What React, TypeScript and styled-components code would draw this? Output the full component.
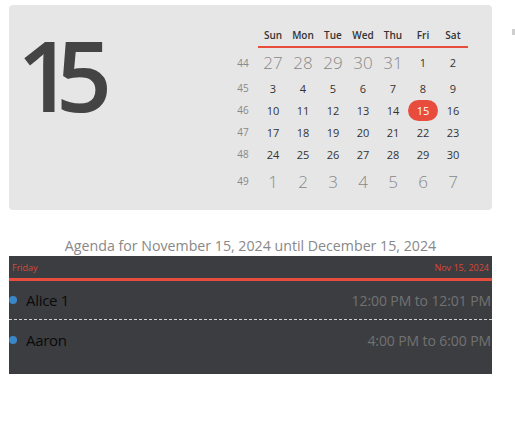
import React from "react";
import styled, { createGlobalStyle } from "styled-components";

const Global = createGlobalStyle`
  html, body { margin: 0; padding: 0; background: #ffffff; }
  body { font-family: "Open Sans", "Noto Sans", sans-serif; }
`;

const Page = styled.div`
  position: relative;
  width: 515px;
  height: 447px;
  padding: 5px 0 0 9px;
  box-sizing: border-box;
`;

const CalendarPanel = styled.div`
  width: 483px;
  height: 205px;
  background: #e6e6e6;
  border-radius: 4px;
  display: flex;
  box-sizing: border-box;
  padding: 21px 24px 0 8px;
`;

const BigDay = styled.div`
  font-size: 98px;
  font-weight: 600;
  line-height: 1;
  color: #444444;
  letter-spacing: -17px;
  margin-top: -1px;
`;

const Grid = styled.div`
  margin-left: auto;
  display: grid;
  grid-template-columns: repeat(8, 30px);
  grid-template-rows: 22px 29px 22px 22px 22px 22px 32px;
`;

const HeadCell = styled.div<{ $blank?: boolean }>`
  display: flex;
  align-items: center;
  justify-content: center;
  font-size: 10px;
  font-weight: 600;
  color: #333333;
  border-bottom: ${(p) => (p.$blank ? "none" : "2px solid #e84c3d")};
  box-sizing: border-box;
  padding-bottom: 2px;
`;

const WeekCell = styled.div`
  display: flex;
  align-items: center;
  justify-content: center;
  font-size: 10px;
  color: #888888;
`;

const DayCell = styled.div<{ $other?: boolean; $today?: boolean }>`
  display: flex;
  align-items: center;
  justify-content: center;
  font-size: ${(p) => (p.$other ? "17px" : "11px")};
  font-weight: ${(p) => (p.$other ? 300 : 400)};
  color: ${(p) => (p.$today ? "#ffffff" : p.$other ? "#888888" : "#333333")};
`;

const TodayPill = styled.span`
  display: flex;
  align-items: center;
  justify-content: center;
  width: 30px;
  height: 21px;
  border-radius: 11px;
  background: #e84c3d;
  color: #ffffff;
`;

const AgendaTitle = styled.div`
  width: 483px;
  margin-top: 25px;
  text-align: center;
  font-size: 14.2px;
  color: #888888;
  line-height: 21px;
`;

const Agenda = styled.div`
  width: 483px;
  background: #3c3d40;
  padding-bottom: 14px;
`;

const AgendaHead = styled.div`
  display: flex;
  justify-content: space-between;
  align-items: center;
  height: 22px;
  padding: 0 3px;
  font-size: 9px;
  color: #d9473a;
  border-bottom: 3px solid #e84c3d;
`;

const EventRow = styled.div<{ $divider?: boolean }>`
  display: flex;
  align-items: center;
  height: ${(p) => (p.$divider ? "38px" : "40px")};
  border-bottom: ${(p) => (p.$divider ? "1px dashed #d0d0d0" : "none")};
`;

const Dot = styled.span`
  width: 8px;
  height: 8px;
  border-radius: 50%;
  background: #3a87c7;
  margin: 0 9px 0 0;
`;

const EventName = styled.span`
  font-size: 15px;
  font-weight: 500;
  color: #0a0a0a;
  letter-spacing: -0.3px;
  flex: 1;
`;

const EventTime = styled.span`
  font-size: 14px;
  color: #727272;
  letter-spacing: -0.1px;
  padding-right: 1px;
`;

const Corner = styled.div`
  position: absolute;
  left: 512px;
  top: 29px;
  width: 3px;
  height: 6px;
  background: #cfcfcf;
`;

const heads = ["Sun", "Mon", "Tue", "Wed", "Thu", "Fri", "Sat"];

type Day = { n: number; other?: boolean; today?: boolean };
const weeks: { wk: number; days: Day[] }[] = [
  { wk: 44, days: [27, 28, 29, 30, 31].map((n) => ({ n, other: true } as Day)).concat([{ n: 1 }, { n: 2 }]) },
  { wk: 45, days: [3, 4, 5, 6, 7, 8, 9].map((n) => ({ n })) },
  { wk: 46, days: [10, 11, 12, 13, 14, 15, 16].map((n) => ({ n, today: n === 15 })) },
  { wk: 47, days: [17, 18, 19, 20, 21, 22, 23].map((n) => ({ n })) },
  { wk: 48, days: [24, 25, 26, 27, 28, 29, 30].map((n) => ({ n })) },
  { wk: 49, days: [1, 2, 3, 4, 5, 6, 7].map((n) => ({ n, other: true })) },
];

const events = [
  { name: "Alice 1", time: "12:00 PM to 12:01 PM" },
  { name: "Aaron", time: "4:00 PM to 6:00 PM" },
];

export default function App() {
  return (
    <Page>
      <Global />
      <Corner />
      <CalendarPanel>
        <BigDay>15</BigDay>
        <Grid>
          <HeadCell $blank />
          {heads.map((h) => (
            <HeadCell key={h}>{h}</HeadCell>
          ))}
          {weeks.map((w) => (
            <React.Fragment key={w.wk}>
              <WeekCell>{w.wk}</WeekCell>
              {w.days.map((d, i) => (
                <DayCell key={i} $other={d.other} $today={d.today}>
                  {d.today ? <TodayPill>{d.n}</TodayPill> : d.n}
                </DayCell>
              ))}
            </React.Fragment>
          ))}
        </Grid>
      </CalendarPanel>
      <AgendaTitle>Agenda for November 15, 2024 until December 15, 2024</AgendaTitle>
      <Agenda>
        <AgendaHead>
          <span>Friday</span>
          <span>Nov 15, 2024</span>
        </AgendaHead>
        {events.map((e, i) => (
          <EventRow key={e.name} $divider={i === 0}>
            <Dot />
            <EventName>{e.name}</EventName>
            <EventTime>{e.time}</EventTime>
          </EventRow>
        ))}
      </Agenda>
    </Page>
  );
}
